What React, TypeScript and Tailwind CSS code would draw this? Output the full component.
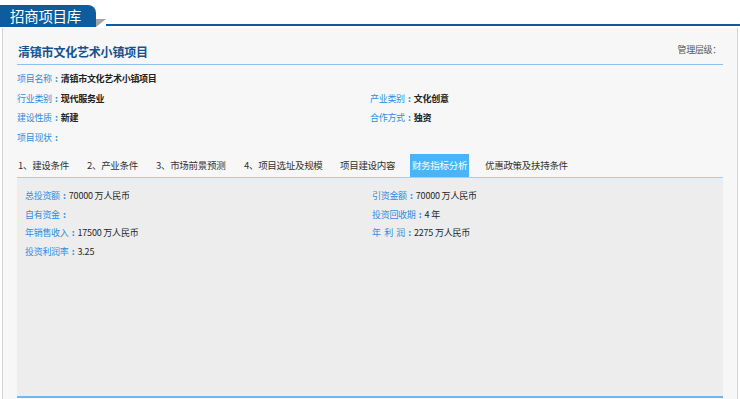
import React from "react";

const info = [
  [{ k: "项目名称", v: "清镇市文化艺术小镇项目" }, null],
  [{ k: "行业类别", v: "现代服务业" }, { k: "产业类别", v: "文化创意" }],
  [{ k: "建设性质", v: "新建" }, { k: "合作方式", v: "独资" }],
  [{ k: "项目现状", v: "" }, null],
];

const tabs = [
  { t: "1、建设条件", c: "w-[70px] h-[23px] leading-[23px] pl-[1px]" },
  { t: "2、产业条件", c: "w-[69px] h-[23px] leading-[23px]" },
  { t: "3、市场前景预测", c: "w-[88px] h-[23px] leading-[23px]" },
  { t: "4、项目选址及规模", c: "w-[96px] h-[23px] leading-[23px]" },
  { t: "项目建设内容", c: "w-[70px] h-[23px] leading-[23px]" },
  { t: "财务指标分析", c: "w-[59px] h-[23px] leading-[23px] text-center bg-[#48b5f8] text-white mr-[16px]" },
  { t: "优惠政策及扶持条件", c: "h-[23px] leading-[23px]" },
];

const finance = [
  [{ k: "总投资额", v: "70000 万人民币" }, { k: "引资金额", v: "70000 万人民币" }],
  [{ k: "自有资金", v: "" }, { k: "投资回收期", v: "4 年" }],
  [{ k: "年销售收入", v: "17500 万人民币" }, { k: "年  利  润", v: "2275 万人民币" }],
  [{ k: "投资利润率", v: "3.25" }, null],
];

function Field({ f, bold }: { f: { k: string; v: string } | null; bold?: boolean }) {
  if (!f) return <div />;
  return (
    <div className="whitespace-pre">
      <span className="text-[#2d8ee0]">
        {f.k}
        <span className="inline-block w-[9px] text-center font-bold">:</span>
      </span>
      <span className={bold ? "text-[#222] font-bold" : "text-[#262626] tracking-[-0.2px]"}>{f.v}</span>
    </div>
  );
}

export default function App() {
  return (
    <div className="w-[740px] h-[399px] overflow-hidden bg-white font-['Microsoft_YaHei','Noto_Sans_CJK_SC',sans-serif] text-[9px] tracking-[-0.3px]">
      {/* header */}
      <div className="flex items-end h-[27px]">
        <div className="h-[22px] w-[96px] bg-[#0c5c9e] rounded-tr-[8px] text-white text-[14.5px] leading-[22px] pl-[10px] shrink-0">
          招商项目库
        </div>
        <div className="flex items-start h-[8px] w-[10px] shrink-0">
          <div className="w-0 h-0 border-t-[8px] border-t-[#a3a3a3] border-r-[10px] border-r-transparent" />
        </div>
        <div className="flex-1 h-[2px] bg-[#0c5c9e] mb-[1px]" />
      </div>

      {/* container */}
      <div className="mx-[2px] mt-[1px] h-[400px] border-x border-[#d4d4d4] bg-[#f7f7f7] px-[14px]">
        <div className="flex items-end justify-between h-[37px] border-b border-[#8ec0ef] pb-[3px]">
          <div className="text-[#17528f] text-[12px] font-bold pl-[1px] tracking-[-0.2px]">清镇市文化艺术小镇项目</div>
          <div className="text-[#555] text-[9px] pr-[2px] mb-[5px]">管理层级：</div>
        </div>

        <div className="pt-[4px] flex flex-col">
          {info.map((row, i) => (
            <div key={i} className="grid grid-cols-[353px_1fr] h-[19.7px] items-center">
              <Field f={row[0]} bold />
              <Field f={row[1]} bold />
            </div>
          ))}
        </div>

        {/* tabs */}
        <div className="mt-[6px] flex items-end h-[24px] border-b border-[#a7cdee] text-[9.5px] text-[#333]">
          {tabs.map((t) => (
            <div key={t.t} className={t.c}>
              {t.t}
            </div>
          ))}
        </div>

        <div className="h-[220px] bg-[#ededed] border-b-2 border-[#6cb8f3] pt-[9px] pl-[8px]">
          {finance.map((row, i) => (
            <div key={i} className="grid grid-cols-[347px_1fr] h-[18.6px] items-center">
              <Field f={row[0]} />
              <Field f={row[1]} />
            </div>
          ))}
        </div>
      </div>
    </div>
  );
}
